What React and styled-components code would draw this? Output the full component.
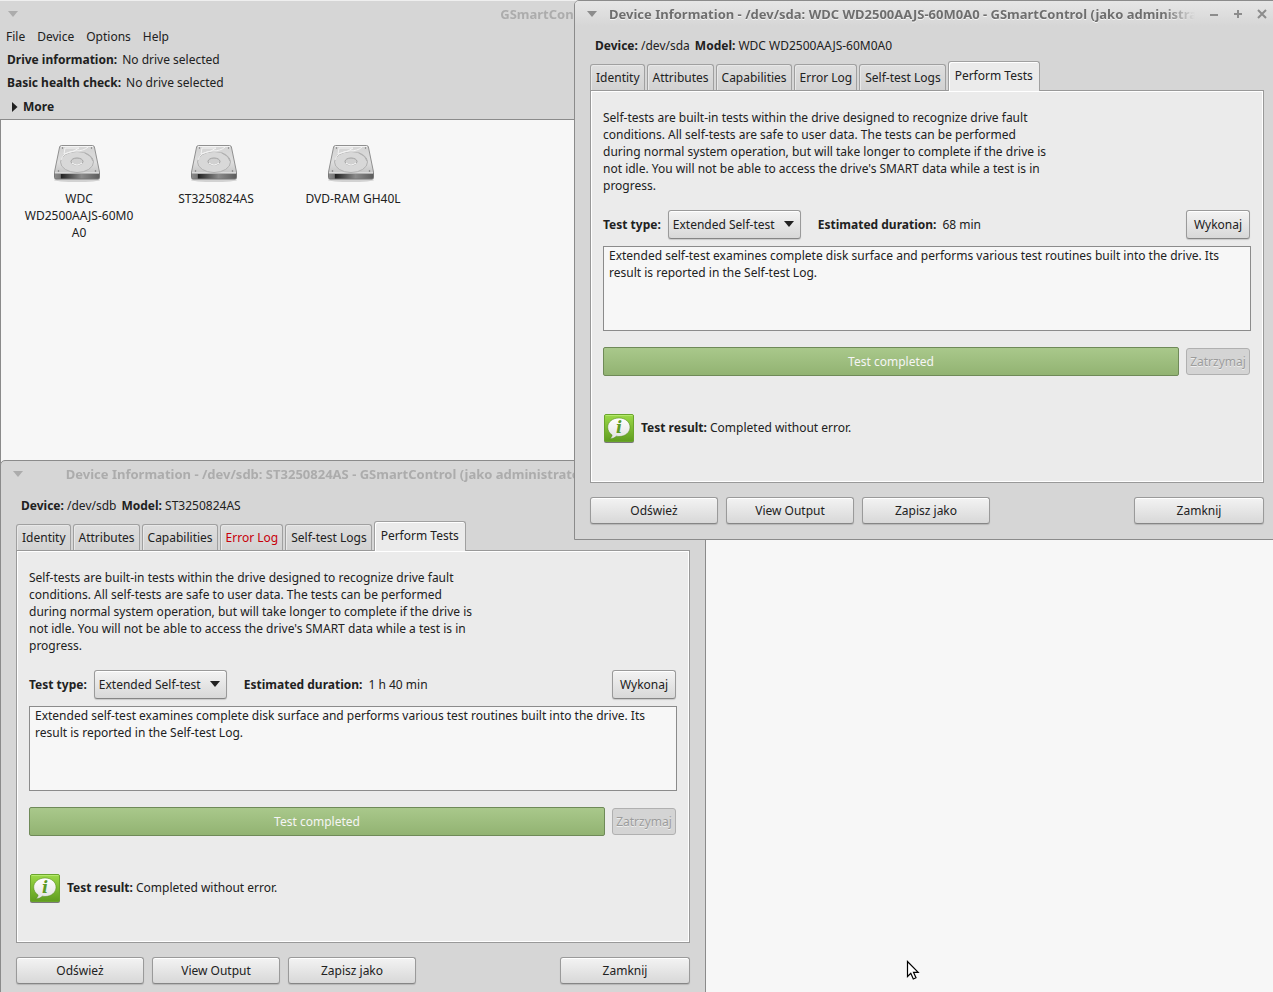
import React, { useState } from "react";
import styled, { createGlobalStyle } from "styled-components";

const drives = ["WDC\nWD2500AAJS-60M0\nA0", "ST3250824AS", "DVD-RAM GH40L"];

const menus = ["File", "Device", "Options", "Help"];

const tabs = [
  "Identity",
  "Attributes",
  "Capabilities",
  "Error Log",
  "Self-test Logs",
  "Perform Tests",
];

const DriveIcon = () => (
  <svg width="52" height="48" viewBox="0 1 52 48" aria-hidden="true">
    <defs>
      <linearGradient id="driveTop" x1="0" y1="0" x2="0" y2="1">
        <stop offset="0" stopColor="#d2d2d2" />
        <stop offset="0.6" stopColor="#dedede" />
        <stop offset="1" stopColor="#c4c4c4" />
      </linearGradient>
      <linearGradient id="driveFront" x1="0" y1="0" x2="1" y2="0">
        <stop offset="0" stopColor="#8c8c8c" />
        <stop offset="0.13" stopColor="#777" />
        <stop offset="0.15" stopColor="#222" />
        <stop offset="0.6" stopColor="#8a8a8a" />
        <stop offset="1" stopColor="#5c5c5c" />
      </linearGradient>
    </defs>
    <ellipse cx="24" cy="39" rx="23" ry="2" fill="#000" opacity="0.15" />
    <path
      d="M8.500 4.500h31q1.500 0 1.900 1.500l5.100 25v1.500H1.500V31L6.600 6q.4-1.500 1.900-1.500z"
      fill="url(#driveTop)"
      stroke="#909090"
    />
    <path d="M8 5.500h32" stroke="#f4f4f4" />
    <path d="M1.500 32.500h45v4q0 1.500-1.500 1.500H3q-1.500 0-1.500-1.500z" fill="url(#driveFront)" stroke="#777" />
    <path d="M2 32h44" stroke="#eee" />
    <ellipse cx="24" cy="21" rx="16.500" ry="10.500" fill="#d8d8d8" stroke="#b2b2b2" />
    <path d="M9 17Q12 8 27 11q8 0 12-4l-3-1H11z" fill="#d6d6d6" />
    <path d="M8 19q2-8 14-9 9 0 13-4M12 7h14l-5 3-10 3z" fill="none" stroke="#f3f3f3" />
    <path d="M32 12q7 3 8 8" fill="none" stroke="#b0b0b0" />
    <ellipse cx="24" cy="20.500" rx="6" ry="3.500" fill="#d0d0d0" stroke="#a2a2a2" />
    <path d="M19 22q5 4 10 0" fill="none" stroke="#fff" />
    <g fill="#777">
      <circle cx="9.500" cy="7" r="0.700" />
      <circle cx="38.500" cy="7" r="0.700" />
      <circle cx="5.500" cy="30" r="0.800" />
      <circle cx="42.500" cy="30" r="0.800" />
    </g>
  </svg>
);

const InfoIcon = () => (
  <svg width="32" height="30" viewBox="0 -1 32 30" overflow="visible" aria-hidden="true">
    <defs>
      <linearGradient id="infoBack" x1="0" y1="0" x2="0" y2="1">
        <stop offset="0" stopColor="#9cda48" />
        <stop offset="1" stopColor="#5f9c1f" />
      </linearGradient>
      <linearGradient id="infoBubble" x1="0" y1="0" x2="0" y2="1">
        <stop offset="0" stopColor="#fff" />
        <stop offset="1" stopColor="#e2e2e2" />
      </linearGradient>
    </defs>
    <rect x="1" y="2" width="30" height="28" rx="2" fill="#4a4a4a" opacity="0.7" />
    <rect x="1.500" y="1.500" width="29" height="27" rx="1.500" fill="url(#infoBack)" stroke="#6aa52c" />
    <path d="M2.500 2.500h27" stroke="#b4e86c" />
    <path
      d="M16 5c6.300 0 11 4 11 9.200s-4.700 9.300-11 9.300c-1 0-1.800-.1-2.700-.3-1.600 1.600-3.800 2.600-6.500 2.500 1.400-1 2.200-2.300 2.300-3.800C6.500 20.200 4.700 17.500 4.700 14.200 4.700 9 9.700 5 16 5z"
      fill="url(#infoBubble)"
      stroke="#4f8618"
      strokeOpacity="0.5"
    />
    <text
      x="16"
      y="20"
      textAnchor="middle"
      fill="#5d9a26"
      fontFamily="DejaVu Serif, serif"
      fontWeight="bold"
      fontStyle="italic"
      fontSize="16"
    >
      i
    </text>
  </svg>
);

const DownArrow = () => (
  <svg width="10" height="6" viewBox="0 0 10 6" fill="currentColor" aria-hidden="true">
    <path d="M0 0h10L5 6z" />
  </svg>
);

const DeviceDialog = ({ id, device, model, duration, left, top, active, failed }) => {
  const [tab, setTab] = useState("Perform Tests");

  return (
    <Dialog $left={left} $top={top} aria-labelledby={`${id}-title`}>
      <TitleBar $active={active}>
        <TitleButton aria-label="Window menu">
          <DownArrow />
        </TitleButton>
        <Title id={`${id}-title`} $active={active}>
          Device Information - {device}: {model} - GSmartControl (jako administrator)
        </Title>
        <WindowButtons>
          <TitleButton aria-label="Minimize">
            <svg width="10" height="10" stroke="currentColor" strokeWidth="2">
              <path d="M1 6h8" />
            </svg>
          </TitleButton>
          <TitleButton aria-label="Maximize">
            <svg width="10" height="10" stroke="currentColor" strokeWidth="2">
              <path d="M1 5h8M5 1v8" />
            </svg>
          </TitleButton>
          <TitleButton aria-label="Close">
            <svg width="10" height="10" stroke="currentColor" strokeWidth="2">
              <path d="M1 1l8 8M9 1l-8 8" />
            </svg>
          </TitleButton>
        </WindowButtons>
      </TitleBar>
      <DialogBody>
        <DeviceLine>
          <b>Device:</b> {device}
          <Model>
            <b>Model:</b> {model}
          </Model>
        </DeviceLine>
        <TabList role="tablist">
          {tabs.map((name) => (
            <Tab
              key={name}
              role="tab"
              aria-selected={name === tab}
              $selected={name === tab}
              $failed={name === failed}
              onClick={() => setTab(name)}
            >
              {name}
            </Tab>
          ))}
        </TabList>
        <Panel role="tabpanel">
          <Intro>
            Self-tests are built-in tests within the drive designed to recognize drive fault
            conditions. All self-tests are safe to user data. The tests can be performed during
            normal system operation, but will take longer to complete if the drive is not idle. You
            will not be able to access the drive's SMART data while a test is in progress.
          </Intro>
          <TestRow>
            <Label htmlFor={`${id}-type`}>Test type:</Label>
            <SelectBox>
              <Select id={`${id}-type`} defaultValue="Extended Self-test">
                <option>Short Self-test</option>
                <option>Extended Self-test</option>
                <option>Conveyance Self-test</option>
              </Select>
              <SelectArrow>
                <DownArrow />
              </SelectArrow>
            </SelectBox>
            <Duration>
              <b>Estimated duration:</b>
              <span>{duration}</span>
            </Duration>
            <Button $width={64} $tall>
              Wykonaj
            </Button>
          </TestRow>
          <Description
            readOnly
            aria-label="Test description"
            defaultValue="Extended self-test examines complete disk surface and performs various test routines built into the drive. Its result is reported in the Self-test Log."
          />
          <ProgressRow>
            <Progress role="progressbar" aria-valuenow={100}>
              Test completed
            </Progress>
            <Button $width={64} disabled>
              Zatrzymaj
            </Button>
          </ProgressRow>
          <Result>
            <InfoIcon />
            <span>
              <b>Test result:</b> Completed without error.
            </span>
          </Result>
        </Panel>
        <Actions>
          <Button $width={128}>Odśwież</Button>
          <Button $width={128}>View Output</Button>
          <Button $width={128}>Zapisz jako</Button>
          <Button $width={130} $last>
            Zamknij
          </Button>
        </Actions>
      </DialogBody>
    </Dialog>
  );
};

const App = () => {
  return (
    <Desktop>
      <GlobalStyle />
      <MainWindow>
        <TitleBar $main>
          <TitleButton aria-label="Window menu">
            <DownArrow />
          </TitleButton>
          <Title>GSmartControl (jako administrator)</Title>
        </TitleBar>
        <MenuBar>
          {menus.map((name) => (
            <MenuItem key={name}>{name}</MenuItem>
          ))}
        </MenuBar>
        <Summary>
          <InfoLine>
            <b>Drive information:</b>
            <span>No drive selected</span>
          </InfoLine>
          <InfoLine>
            <b>Basic health check:</b>
            <span>No drive selected</span>
          </InfoLine>
          <More>
            <svg width="6" height="10" fill="currentColor" aria-hidden="true">
              <path d="M0 0l5.500 5L0 10z" />
            </svg>
            More
          </More>
        </Summary>
        <DriveList>
          {drives.map((name) => (
            <Drive key={name}>
              <DriveIcon />
              {name}
            </Drive>
          ))}
        </DriveList>
      </MainWindow>
      <DeviceDialog
        id="sdb"
        device="/dev/sdb"
        model="ST3250824AS"
        duration="1 h 40 min"
        left={0}
        top={460}
        failed="Error Log"
      />
      <DeviceDialog
        id="sda"
        device="/dev/sda"
        model="WDC WD2500AAJS-60M0A0"
        duration="68 min"
        left={574}
        top={0}
        active
      />
      <Pointer width="14" height="22" viewBox="0 0 14 22" aria-hidden="true">
        <path
          d="M1.500 1.500v15l3.300-3.200 2.500 5.700 2.700-1.200-2.500-5.500h4.700z"
          fill="#fff"
          stroke="#000"
          strokeWidth="1.200"
        />
      </Pointer>
    </Desktop>
  );
};

export default App;

const GlobalStyle = createGlobalStyle`
  * {
    box-sizing: border-box;
  }

  body {
    margin: 0;
    color: #212121;
    font: 12px/17px "Noto Sans", sans-serif;
  }

  button, select, textarea {
    margin: 0;
    color: inherit;
    font: inherit;
  }
`;

const Desktop = styled.div`
  position: relative;
  height: 100vh;
  overflow: hidden;
  background: #f7f7f7;
`;

const MainWindow = styled.main`
  display: flex;
  flex-direction: column;
  height: 100%;
  border-top: 1px solid #efefef;
  background: #d6d6d6;
`;

const TitleBar = styled.header`
  display: flex;
  align-items: center;
  gap: 12px;
  height: 25px;
  padding: ${(props) => (props.$main ? "0 72px 0 8px" : "0 12px")};
  color: ${(props) => (props.$active ? "#8c8c8c" : "#acacac")};
  background: ${(props) => (props.$active ? "linear-gradient(#e6e6e6, #d6d6d6)" : "none")};
  border-radius: 4px 4px 0 0;
`;

const Title = styled.h1`
  flex: 1;
  margin: 0;
  overflow: hidden;
  color: ${(props) => (props.$active ? "#6e6e6e" : "#acacac")};
  font-size: 13px;
  line-height: 18px;
  text-align: center;
  text-shadow: ${(props) => (props.$active ? "0 1px #f4f4f4" : "none")};
  white-space: nowrap;
  mask-image: linear-gradient(to left, transparent, #000 32px);
`;

const WindowButtons = styled.div`
  display: flex;
  gap: 14px;
  margin-left: 2px;
`;

const TitleButton = styled.button`
  display: flex;
  padding: 0;
  border: none;
  color: inherit;
  background: none;
`;

const MenuBar = styled.nav`
  display: flex;
  gap: 12px;
  padding: 2px 6px 0;
`;

const MenuItem = styled.button`
  padding: 0;
  border: none;
  background: none;
`;

const Summary = styled.section`
  display: flex;
  flex-direction: column;
  gap: 6px;
  padding: 6px 7px 4px;
`;

const InfoLine = styled.div`
  display: flex;
  gap: 5px;
`;

const More = styled.button`
  display: flex;
  align-items: center;
  align-self: flex-start;
  gap: 5px;
  margin-top: 1px;
  padding: 0 5px;
  border: none;
  background: none;
  font-weight: bold;
`;

const DriveList = styled.ul`
  display: flex;
  flex: 1;
  align-items: flex-start;
  gap: 19px;
  margin: 0;
  padding: 22px 19px;
  border: solid #8b8b8b;
  border-width: 1px 0 0 1px;
  background: #f7f7f7;
  list-style: none;
`;

const Drive = styled.li`
  display: flex;
  flex-direction: column;
  align-items: center;
  width: 118px;
  text-align: center;
  white-space: pre;
`;

const Dialog = styled.section`
  position: absolute;
  left: ${(props) => props.$left}px;
  top: ${(props) => props.$top}px;
  width: 706px;
  border: 1px solid #8b8b8b;
  border-radius: 5px 5px 0 0;
  background: #d6d6d6;
`;

const DialogBody = styled.div`
  padding: 11px 15px 15px;
`;

const DeviceLine = styled.div`
  padding: 0 5px;
`;

const Model = styled.span`
  margin-left: 5px;
`;

const TabList = styled.div`
  display: flex;
  align-items: flex-end;
  gap: 2px;
  margin-top: 7px;
`;

const Tab = styled.button`
  height: ${(props) => (props.$selected ? "30px" : "26px")};
  margin-bottom: ${(props) => (props.$selected ? "-1px" : "0")};
  padding: ${(props) => (props.$selected ? "0 6px 2px" : "0 4px 0 5px")};
  border: 1px solid #a0a0a0;
  border-bottom: none;
  border-radius: 3px 3px 0 0;
  color: ${(props) => (props.$failed ? "#c8000a" : "inherit")};
  background: ${(props) => (props.$selected ? "#ebebeb" : "linear-gradient(#dedede, #d2d2d2)")};
  box-shadow: inset 1px 1px ${(props) => (props.$selected ? "#fff" : "#e8e8e8")};
  z-index: ${(props) => (props.$selected ? 1 : 0)};
`;

const Panel = styled.div`
  padding: 18px 12px 40px;
  border: 1px solid #999;
  background: #ebebeb;
  box-shadow: inset 0 0 0 1px #fff;
`;

const Intro = styled.p`
  max-width: 452px;
  margin: 0;
`;

const TestRow = styled.div`
  display: flex;
  align-items: center;
  margin-top: 16px;
  padding-right: 1px;
`;

const Label = styled.label`
  margin-right: 7px;
  font-weight: bold;
`;

const raised = `
  border: 1px solid #9a9a9a;
  border-bottom-color: #858585;
  border-radius: 3px;
  background: linear-gradient(#f3f3f3, #d8d8d8);
  box-shadow: inset 0 1px #fff, 0 1px 1px rgba(0, 0, 0, 0.15);
`;

const SelectBox = styled.div`
  position: relative;
`;

const Select = styled.select`
  ${raised}
  width: 133px;
  height: 29px;
  padding: 0 20px 0 4px;
  appearance: none;
`;

const SelectArrow = styled.span`
  position: absolute;
  top: 11px;
  right: 7px;
  display: flex;
  pointer-events: none;
`;

const Duration = styled.div`
  display: flex;
  flex: 1;
  gap: 6px;
  margin-left: 17px;
`;

const Button = styled.button`
  ${raised}
  width: ${(props) => props.$width}px;
  height: ${(props) => (props.$tall ? "29px" : "27px")};
  margin-left: ${(props) => (props.$last ? "auto" : "0")};
  padding: 0;

  &:disabled {
    border-color: #b0b0b0;
    color: #9c9c9c;
    background: #d4d4d4;
    box-shadow: none;
    text-shadow: 0 1px #eee;
  }
`;

const Description = styled.textarea`
  display: block;
  width: 100%;
  height: 85px;
  margin-top: 7px;
  padding: 0 5px;
  border: 1px solid #8b8b8b;
  background: #f7f7f7;
  outline: none;
  resize: none;
`;

const ProgressRow = styled.div`
  display: flex;
  align-items: center;
  gap: 7px;
  margin-top: 16px;
  padding-right: 1px;
`;

const Progress = styled.div`
  flex: 1;
  height: 29px;
  border: 1px solid #6f8a58;
  border-radius: 2px;
  color: #f5f5f5;
  background: linear-gradient(#a9c88b, #92b372);
  line-height: 27px;
  text-align: center;
`;

const Result = styled.div`
  display: flex;
  align-items: center;
  gap: 6px;
  margin-top: 36px;
`;

const Actions = styled.footer`
  display: flex;
  gap: 8px;
  margin-top: 14px;
`;

const Pointer = styled.svg`
  position: absolute;
  left: 906px;
  top: 960px;
`;
